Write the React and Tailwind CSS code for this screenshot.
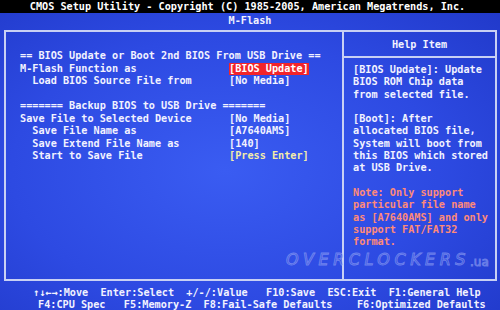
import React from 'react';

const rows = [
  { label: '== BIOS Update or Boot 2nd BIOS From USB Drive ==', header: true },
  { label: 'M-Flash Function as', value: '[BIOS Update]', selected: true },
  { label: '  Load BIOS Source File from', value: '[No Media]' },
  { label: '' },
  { label: '======= Backup BIOS to USB Drive =======', header: true },
  { label: 'Save File to Selected Device', value: '[No Media]' },
  { label: '  Save File Name as', value: '[A7640AMS]' },
  { label: '  Save Extend File Name as', value: '[140]' },
  { label: '  Start to Save File', value: '[Press Enter]', yellow: true },
];

const help = [
  '[BIOS Update]: Update',
  'BIOS ROM Chip data',
  'from selected file.',
  '',
  '[Boot]: After',
  'allocated BIOS file,',
  'System will boot from',
  'this BIOS which stored',
  'at USB Drive.',
  '',
];

const note = [
  'Note: Only support',
  'particular file name',
  'as [A7640AMS] and only',
  'support FAT/FAT32',
  'format.',
];

export default function App() {
  return (
    <div className="relative w-[500px] h-[310px] overflow-hidden font-['DejaVu_Sans_Mono','Liberation_Mono',monospace] font-bold text-[10.2px] text-[#f2f2ff] bg-[radial-gradient(ellipse_at_45%_55%,#3a5cf2_0%,#2d4ae2_55%,#2038c8_100%)] whitespace-pre">
      {/* title bar */}
      <div className="h-[13px] bg-black leading-[13px] text-center pr-[5px] text-white">
        CMOS Setup Utility - Copyright (C) 1985-2005, American Megatrends, Inc.
      </div>
      <div className="h-[17px] leading-[15px] text-center">M-Flash</div>

      {/* main box */}
      <div className="ml-[4px] w-[493px] h-[251px] border-2 border-[#c8d0f4] flex">
        <div className="w-[336px] pt-[18px] pl-[14px] leading-[12.5px]">
          {rows.map((r, i) => (
            <div key={i} className="flex h-[12.5px]">
              <div className={r.header ? '' : 'w-[209px]'}>{r.label}</div>
              {r.value && (
                <div
                  className={
                    r.selected
                      ? 'bg-[#f2242a] text-white'
                      : r.yellow
                      ? 'text-[#f4eca8]'
                      : ''
                  }
                >
                  {r.value}
                </div>
              )}
            </div>
          ))}
        </div>
        <div className="w-[2px] bg-[#c8d0f4]" />
        <div className="flex-1 flex flex-col">
          <div className="h-[24px] leading-[26px] text-center">Help Item</div>
          <div className="h-[2px] bg-[#c8d0f4]" />
          <div className="pt-[6px] pl-[9px] leading-[12.3px]">
            {help.map((l, i) => (
              <div key={i} className="h-[12.3px]">{l}</div>
            ))}
            {note.map((l, i) => (
              <div key={i} className="h-[12.3px] text-[#ff8a78]">{l}</div>
            ))}
          </div>
        </div>
      </div>

      {/* footer */}
      <div className="mt-[6px] leading-[11.5px]">
        <div className="pl-[33px]">↑↓←→:Move  Enter:Select  +/-/:Value   F10:Save  ESC:Exit  F1:General Help</div>
        <div className="pl-[38px]">F4:CPU Spec   F5:Memory-Z  F8:Fail-Safe Defaults    F6:Optimized Defaults</div>
      </div>

      {/* photo watermark */}
      <div className="absolute left-[286px] top-[252px] flex items-end pointer-events-none">
        <span className="font-['DejaVu_Sans',sans-serif] font-normal italic text-[16px] leading-[16px] tracking-[4.5px] text-[#2a44d6]/40 [-webkit-text-stroke:1px_rgba(190,200,255,0.45)]">
          OVERCLOCKERS
        </span>
        <span className="font-['DejaVu_Sans',sans-serif] font-normal text-[12px] leading-[12px] text-transparent [-webkit-text-stroke:1px_rgba(190,200,255,0.45)]">
          .ua
        </span>
      </div>
    </div>
  );
}
